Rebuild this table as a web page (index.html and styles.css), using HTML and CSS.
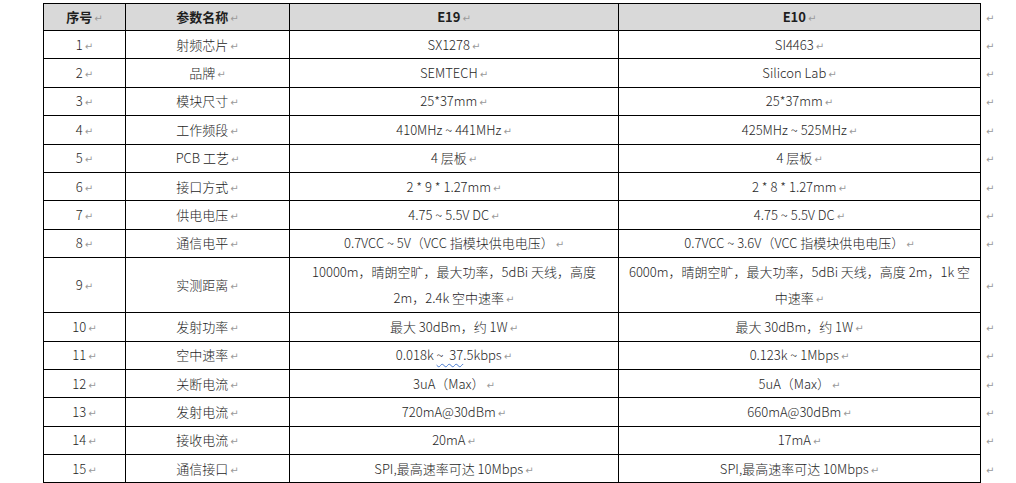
FILE: index.html
```html
<!DOCTYPE html>
<html lang="zh-CN">
<head>
<meta charset="utf-8">
<title>E19 / E10 参数对比</title>
<link rel="stylesheet" href="styles.css">
</head>
<body>
<table class="spec">
  <colgroup>
    <col class="c-no"><col class="c-name"><col class="c-e19"><col class="c-e10"><col class="c-end">
  </colgroup>
  <thead>
    <tr class="head">
      <th>序号<span class="pm">↵</span></th>
      <th>参数名称<span class="pm">↵</span></th>
      <th>E19<span class="pm">↵</span></th>
      <th>E10<span class="pm">↵</span></th>
      <td class="end"><span class="pm">↵</span></td>
    </tr>
  </thead>
  <tbody>
    <tr><td>1<span class="pm">↵</span></td><td>射频芯片<span class="pm">↵</span></td><td>SX1278<span class="pm">↵</span></td><td>SI4463<span class="pm">↵</span></td><td class="end"><span class="pm">↵</span></td></tr>
    <tr><td>2<span class="pm">↵</span></td><td>品牌<span class="pm">↵</span></td><td>SEMTECH<span class="pm">↵</span></td><td>Silicon Lab<span class="pm">↵</span></td><td class="end"><span class="pm">↵</span></td></tr>
    <tr><td>3<span class="pm">↵</span></td><td>模块尺寸<span class="pm">↵</span></td><td>25*37mm<span class="pm">↵</span></td><td>25*37mm<span class="pm">↵</span></td><td class="end"><span class="pm">↵</span></td></tr>
    <tr><td>4<span class="pm">↵</span></td><td>工作频段<span class="pm">↵</span></td><td>410MHz ~ 441MHz<span class="pm">↵</span></td><td>425MHz ~ 525MHz<span class="pm">↵</span></td><td class="end"><span class="pm">↵</span></td></tr>
    <tr><td>5<span class="pm">↵</span></td><td>PCB 工艺<span class="pm">↵</span></td><td>4 层板<span class="pm">↵</span></td><td>4 层板<span class="pm">↵</span></td><td class="end"><span class="pm">↵</span></td></tr>
    <tr><td>6<span class="pm">↵</span></td><td>接口方式<span class="pm">↵</span></td><td>2 * 9 * 1.27mm<span class="pm">↵</span></td><td>2 * 8 * 1.27mm<span class="pm">↵</span></td><td class="end"><span class="pm">↵</span></td></tr>
    <tr><td>7<span class="pm">↵</span></td><td>供电电压<span class="pm">↵</span></td><td>4.75 ~ 5.5V DC<span class="pm">↵</span></td><td>4.75 ~ 5.5V DC<span class="pm">↵</span></td><td class="end"><span class="pm">↵</span></td></tr>
    <tr><td>8<span class="pm">↵</span></td><td>通信电平<span class="pm">↵</span></td><td>0.7VCC ~ 5V（VCC 指模块供电电压）<span class="pm">↵</span></td><td>0.7VCC ~ 3.6V（VCC 指模块供电电压）<span class="pm">↵</span></td><td class="end"><span class="pm">↵</span></td></tr>
    <tr class="tall"><td>9<span class="pm">↵</span></td><td>实测距离<span class="pm">↵</span></td><td><span class="ln">10000m，晴朗空旷，最大功率，5dBi 天线，高度</span><br>2m，2.4k 空中速率<span class="pm">↵</span></td><td><span class="ln">6000m，晴朗空旷，最大功率，5dBi 天线，高度 2m，1k 空</span><br>中速率<span class="pm">↵</span></td><td class="end"><span class="pm">↵</span></td></tr>
    <tr><td>10<span class="pm">↵</span></td><td>发射功率<span class="pm">↵</span></td><td>最大 30dBm，约 1W<span class="pm">↵</span></td><td>最大 30dBm，约 1W<span class="pm">↵</span></td><td class="end"><span class="pm">↵</span></td></tr>
    <tr><td>11<span class="pm">↵</span></td><td>空中速率<span class="pm">↵</span></td><td>0.018k <span class="spell">~&nbsp; 37</span>.5kbps<span class="pm">↵</span></td><td>0.123k ~ 1Mbps<span class="pm">↵</span></td><td class="end"><span class="pm">↵</span></td></tr>
    <tr><td>12<span class="pm">↵</span></td><td>关断电流<span class="pm">↵</span></td><td>3uA（Max）<span class="pm">↵</span></td><td>5uA（Max）<span class="pm">↵</span></td><td class="end"><span class="pm">↵</span></td></tr>
    <tr><td>13<span class="pm">↵</span></td><td>发射电流<span class="pm">↵</span></td><td>720mA@30dBm<span class="pm">↵</span></td><td>660mA@30dBm<span class="pm">↵</span></td><td class="end"><span class="pm">↵</span></td></tr>
    <tr><td>14<span class="pm">↵</span></td><td>接收电流<span class="pm">↵</span></td><td>20mA<span class="pm">↵</span></td><td>17mA<span class="pm">↵</span></td><td class="end"><span class="pm">↵</span></td></tr>
    <tr><td>15<span class="pm">↵</span></td><td>通信接口<span class="pm">↵</span></td><td>SPI,最高速率可达 10Mbps<span class="pm">↵</span></td><td>SPI,最高速率可达 10Mbps<span class="pm">↵</span></td><td class="end"><span class="pm">↵</span></td></tr>
  </tbody>
</table>
</body>
</html>
```
FILE: styles.css
```css
html, body {
  margin: 0;
  padding: 0;
  background: #ffffff;
}

body {
  font-family: "Noto Sans CJK SC", "Noto Sans", sans-serif;
  font-size: 13px;
  font-weight: 300;
  color: #1e1e1e;
}

.spec {
  border-collapse: collapse;
  table-layout: fixed;
  margin: 3px 0 0 43px;
  width: 957px;
}

.c-no { width: 82px; }
.c-name { width: 164px; }
.c-e19 { width: 329px; }
.c-e10 { width: 362px; }
.c-end { width: 20px; }

.spec th,
.spec td {
  border: 1px solid #000;
  text-align: center;
  vertical-align: middle;
  line-height: 26px;
  height: 28.4px;
  box-sizing: border-box;
  padding: 0 2px;
  white-space: nowrap;
  font-weight: 300;
}

.spec .tall td {
  height: 55px;
}

.spec .head th {
  background: #d9d9d9;
  font-weight: bold;
}

.spec .head th,
.spec .head td {
  height: 27px;
}

.spec td.end {
  border: none;
  text-align: left;
  padding-left: 3px;
  background: transparent;
}

.ln {
  white-space: nowrap;
}

.pm {
  font-family: "DejaVu Sans", sans-serif;
  font-size: 10px;
  line-height: 0;
  color: #9a9a9a;
  font-weight: normal;
  margin-left: 2px;
}

.spell {
  text-decoration: underline wavy #4a7bd0;
  text-decoration-thickness: 1px;
  text-underline-offset: 3px;
}
```
